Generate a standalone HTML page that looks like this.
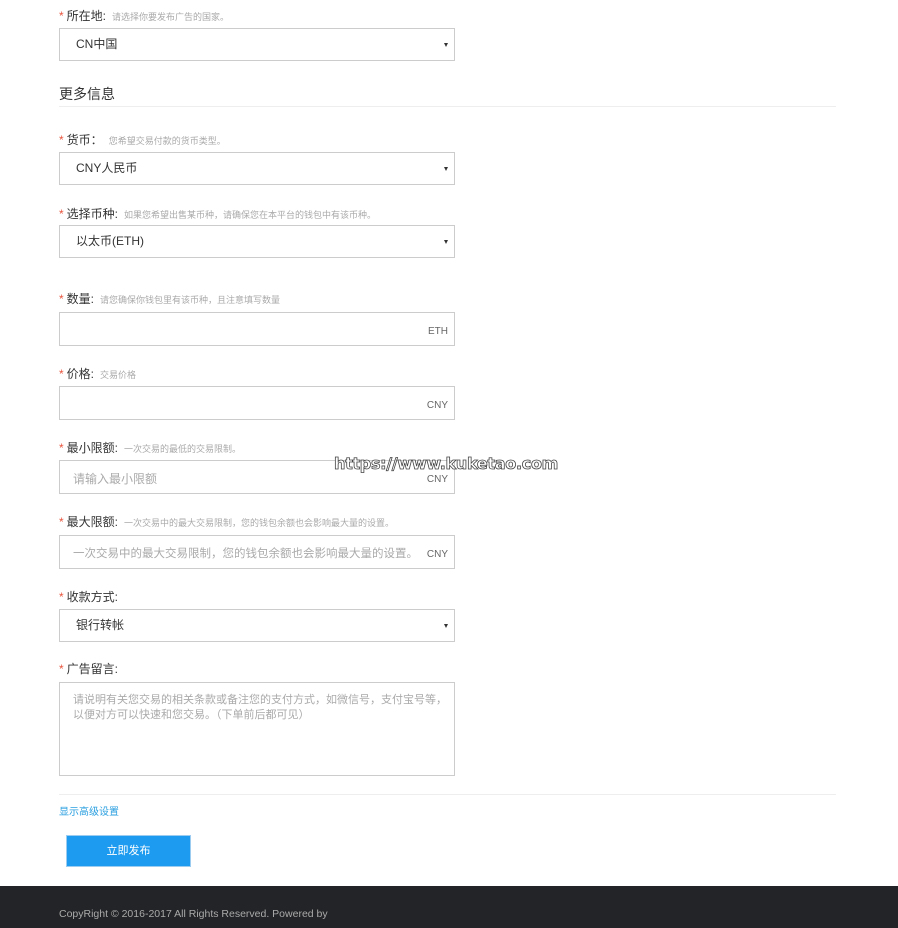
<!DOCTYPE html>
<html><head><meta charset="utf-8"><style>
*{margin:0;padding:0;box-sizing:border-box}
body{width:898px;height:928px;background:#fff;position:relative;overflow:hidden;font-family:"Liberation Sans","Noto Sans CJK SC",sans-serif;color:#333}
.a{position:absolute}
.lbl{position:absolute;left:59px;font-size:12px;color:#333;white-space:nowrap;line-height:16px}
.lbl i{font-style:normal;color:#e8553e;margin-right:3px}
.lbl span{font-size:9px;color:#aaa;margin-left:6px}
.box{position:absolute;left:59px;width:396px;border:1px solid #ccc;background:#fff;font-size:12px;color:#333}
.sel{padding-left:16px;line-height:31px}
.sel:after{content:"";position:absolute;right:6px;top:14px;border-left:2px solid transparent;border-right:2px solid transparent;border-top:4px solid #333}
.u{position:absolute;right:6px;bottom:8px;font-size:10px;color:#666}
.ph{position:absolute;left:13px;top:9px;font-size:12px;color:#aaa;white-space:nowrap}
</style></head><body>
<div class="lbl" style="top:8px"><i>*</i>所在地:<span>请选择你要发布广告的国家。</span></div>
<div class="box sel" style="top:28px;height:33px">CN中国</div>
<div class="a" style="left:59px;top:84px;font-size:14px;color:#333">更多信息</div>
<div class="a" style="left:59px;top:106px;width:777px;height:1px;background:#eee"></div>
<div class="lbl" style="top:132px"><i>*</i>货币：<span>您希望交易付款的货币类型。</span></div>
<div class="box sel" style="top:152px;height:33px">CNY人民币</div>
<div class="lbl" style="top:206px"><i>*</i>选择币种:<span>如果您希望出售某币种，请确保您在本平台的钱包中有该币种。</span></div>
<div class="box sel" style="top:225px;height:33px">以太币(ETH)</div>
<div class="lbl" style="top:291px"><i>*</i>数量:<span>请您确保你钱包里有该币种，且注意填写数量</span></div>
<div class="box" style="top:312px;height:34px"><div class="u">ETH</div></div>
<div class="lbl" style="top:366px"><i>*</i>价格:<span>交易价格</span></div>
<div class="box" style="top:386px;height:34px"><div class="u">CNY</div></div>
<div class="lbl" style="top:440px"><i>*</i>最小限额:<span>一次交易的最低的交易限制。</span></div>
<div class="box" style="top:460px;height:34px"><div class="ph">请输入最小限额</div><div class="u">CNY</div></div>
<div class="lbl" style="top:514px"><i>*</i>最大限额:<span>一次交易中的最大交易限制，您的钱包余额也会影响最大量的设置。</span></div>
<div class="box" style="top:535px;height:34px"><div class="ph" style="font-size:11.5px">一次交易中的最大交易限制，您的钱包余额也会影响最大量的设置。</div><div class="u">CNY</div></div>
<div class="lbl" style="top:589px"><i>*</i>收款方式:</div>
<div class="box sel" style="top:609px;height:33px">银行转帐</div>
<div class="lbl" style="top:661px"><i>*</i>广告留言:</div>
<div class="box" style="top:682px;height:94px"><div class="ph" style="font-size:11px;line-height:15px;top:10px;white-space:normal;width:380px">请说明有关您交易的相关条款或备注您的支付方式，如微信号，支付宝号等，以便对方可以快速和您交易。（下单前后都可见）</div></div>
<div class="a" style="left:59px;top:794px;width:777px;height:1px;background:#eee"></div>
<div class="a" style="left:59px;top:803px;font-size:10px;color:#2a9fe0">显示高级设置</div>
<div class="a" style="left:66px;top:835px;width:125px;height:32px;background:#1c9bf0;border:1px solid #9ccdf0;color:#fff;font-size:11px;text-align:center;line-height:30px">立即发布</div>
<div class="a" style="left:334px;top:454px;font-size:16px;font-weight:bold;color:#fff;-webkit-text-stroke:0.8px #444;letter-spacing:-0.3px;font-family:'DejaVu Sans',sans-serif">https://www.kuketao.com</div>
<div class="a" style="left:0;top:886px;width:898px;height:42px;background:#232427"></div>
<div class="a" style="left:59px;top:908px;font-size:10.5px;color:#aaa">CopyRight © 2016-2017 All Rights Reserved. Powered by</div>
</body></html>
